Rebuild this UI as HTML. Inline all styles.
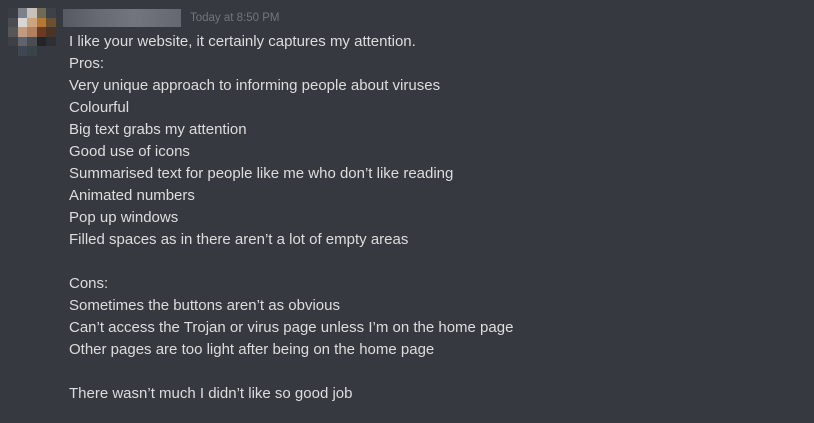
<!DOCTYPE html>
<html><head><style>
body{margin:0;width:814px;height:423px;background:#36393f;overflow:hidden;font-family:"Liberation Sans",sans-serif;}
.av{position:absolute;left:8px;top:8px;width:48px;height:48px;display:grid;grid-template-columns:repeat(5,1fr);grid-template-rows:repeat(5,1fr);}
.name{position:absolute;left:63px;top:9px;width:118px;height:18px;background:linear-gradient(90deg,#5a5d65,#6c6f78 30%,#7a7c85 60%,#6a6d76);opacity:.9}
.ts{position:absolute;left:190px;top:12px;font-size:11.5px;color:#72767d}
.msg{position:absolute;left:69px;top:31px;font-size:15px;line-height:22px;color:#dcddde;white-space:pre}
</style></head><body>
<div class="av">
<div style="background:#3a3d44"></div><div style="background:#7d8088"></div><div style="background:#c7c3bb"></div><div style="background:#6e6a55"></div><div style="background:#3e4147"></div>
<div style="background:#4a4c52"></div><div style="background:#d8d6d3"></div><div style="background:#d0a47a"></div><div style="background:#b5782e"></div><div style="background:#6a5030"></div>
<div style="background:#55565a"></div><div style="background:#c19a80"></div><div style="background:#b08060"></div><div style="background:#6a3a22"></div><div style="background:#4a3428"></div>
<div style="background:#3e4046"></div><div style="background:#60636b"></div><div style="background:#4a4d52"></div><div style="background:#222427"></div><div style="background:#2d2f33"></div>
<div style="background:#36393f"></div><div style="background:#3f4850"></div><div style="background:#3a4448"></div><div style="background:#36393f"></div><div style="background:#36393f"></div>
</div>
<div class="name"></div>
<div class="ts">Today at 8:50 PM</div>
<div class="msg">I like your website, it certainly captures my attention.
Pros:
Very unique approach to informing people about viruses
Colourful
Big text grabs my attention
Good use of icons
Summarised text for people like me who don’t like reading
Animated numbers
Pop up windows
Filled spaces as in there aren’t a lot of empty areas

Cons:
Sometimes the buttons aren’t as obvious
Can’t access the Trojan or virus page unless I’m on the home page
Other pages are too light after being on the home page

There wasn’t much I didn’t like so good job</div>
</body></html>
